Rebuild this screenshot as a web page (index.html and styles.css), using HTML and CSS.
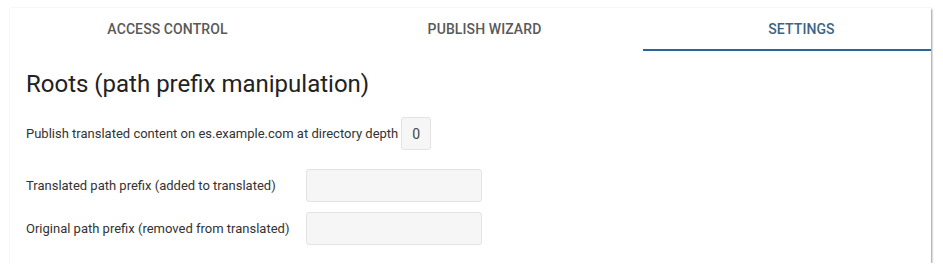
FILE: index.html
```html
<!DOCTYPE html>
<html>
<head>
<meta charset="utf-8">
<link rel="stylesheet" href="styles.css">
</head>
<body>
<div class="card">
  <div class="tabs">
    <div class="tab">Access Control</div>
    <div class="tab">Publish Wizard</div>
    <div class="tab active">Settings</div>
  </div>
  <div class="content">
    <h2 class="title">Roots (path prefix manipulation)</h2>
    <div class="depth-row">
      <span>Publish translated content on es.example.com at directory depth</span>
      <span class="depth-box">0</span>
    </div>
    <div class="grid">
      <label class="lbl">Translated path prefix (added to translated)</label>
      <div class="field"></div>
      <label class="lbl">Original path prefix (removed from translated)</label>
      <div class="field"></div>
    </div>
  </div>
</div>
</body>
</html>
```
FILE: styles.css
```css
html, body { margin: 0; padding: 0; background: #fff; }
body { font-family: Roboto, "Noto Sans", sans-serif; color: #333; }
.card {
  margin: 8px 0 0 10px;
  width: 921px;
  height: 255px;
  background: #fff;
  box-shadow: 1px 1px 2px rgba(0,0,0,0.4), 0 0 1px rgba(0,0,0,0.06);
  overflow: hidden;
}
.tabs { display: flex; width: 951px; height: 43px; margin-left: -1px; }
.tab {
  width: 317px; flex: none;
  display: flex; align-items: center; justify-content: center;
  text-transform: uppercase; font-size: 14px; font-weight: 500;
  color: #595959; letter-spacing: 0.1px;
  box-sizing: border-box; padding-bottom: 2px;
}
.tab.active { color: #3d6384; border-bottom: 2px solid #2c6593; padding-bottom: 0; }
.content { padding: 0 16px; }
.title {
  margin: 16px 0 0; font-size: 24px; font-weight: 400; color: #222;
  line-height: 34px;
}
.depth-row {
  display: flex; align-items: center; gap: 3px;
  margin-top: 16px; font-size: 13px; color: #333;
}
.depth-box {
  width: 30px; height: 33px; box-sizing: border-box;
  background: #f6f6f6; border: 1px solid #e3e3e3; border-radius: 3px;
  display: flex; align-items: center; justify-content: center;
  font-size: 14px; color: #444;
}
.grid {
  display: grid; grid-template-columns: 280px 176px;
  row-gap: 10px; margin-top: 19px; align-items: center;
  font-size: 13px;
}
.field {
  height: 33px; box-sizing: border-box;
  background: #f6f6f6; border: 1px solid #e3e3e3; border-radius: 3px;
}
```
